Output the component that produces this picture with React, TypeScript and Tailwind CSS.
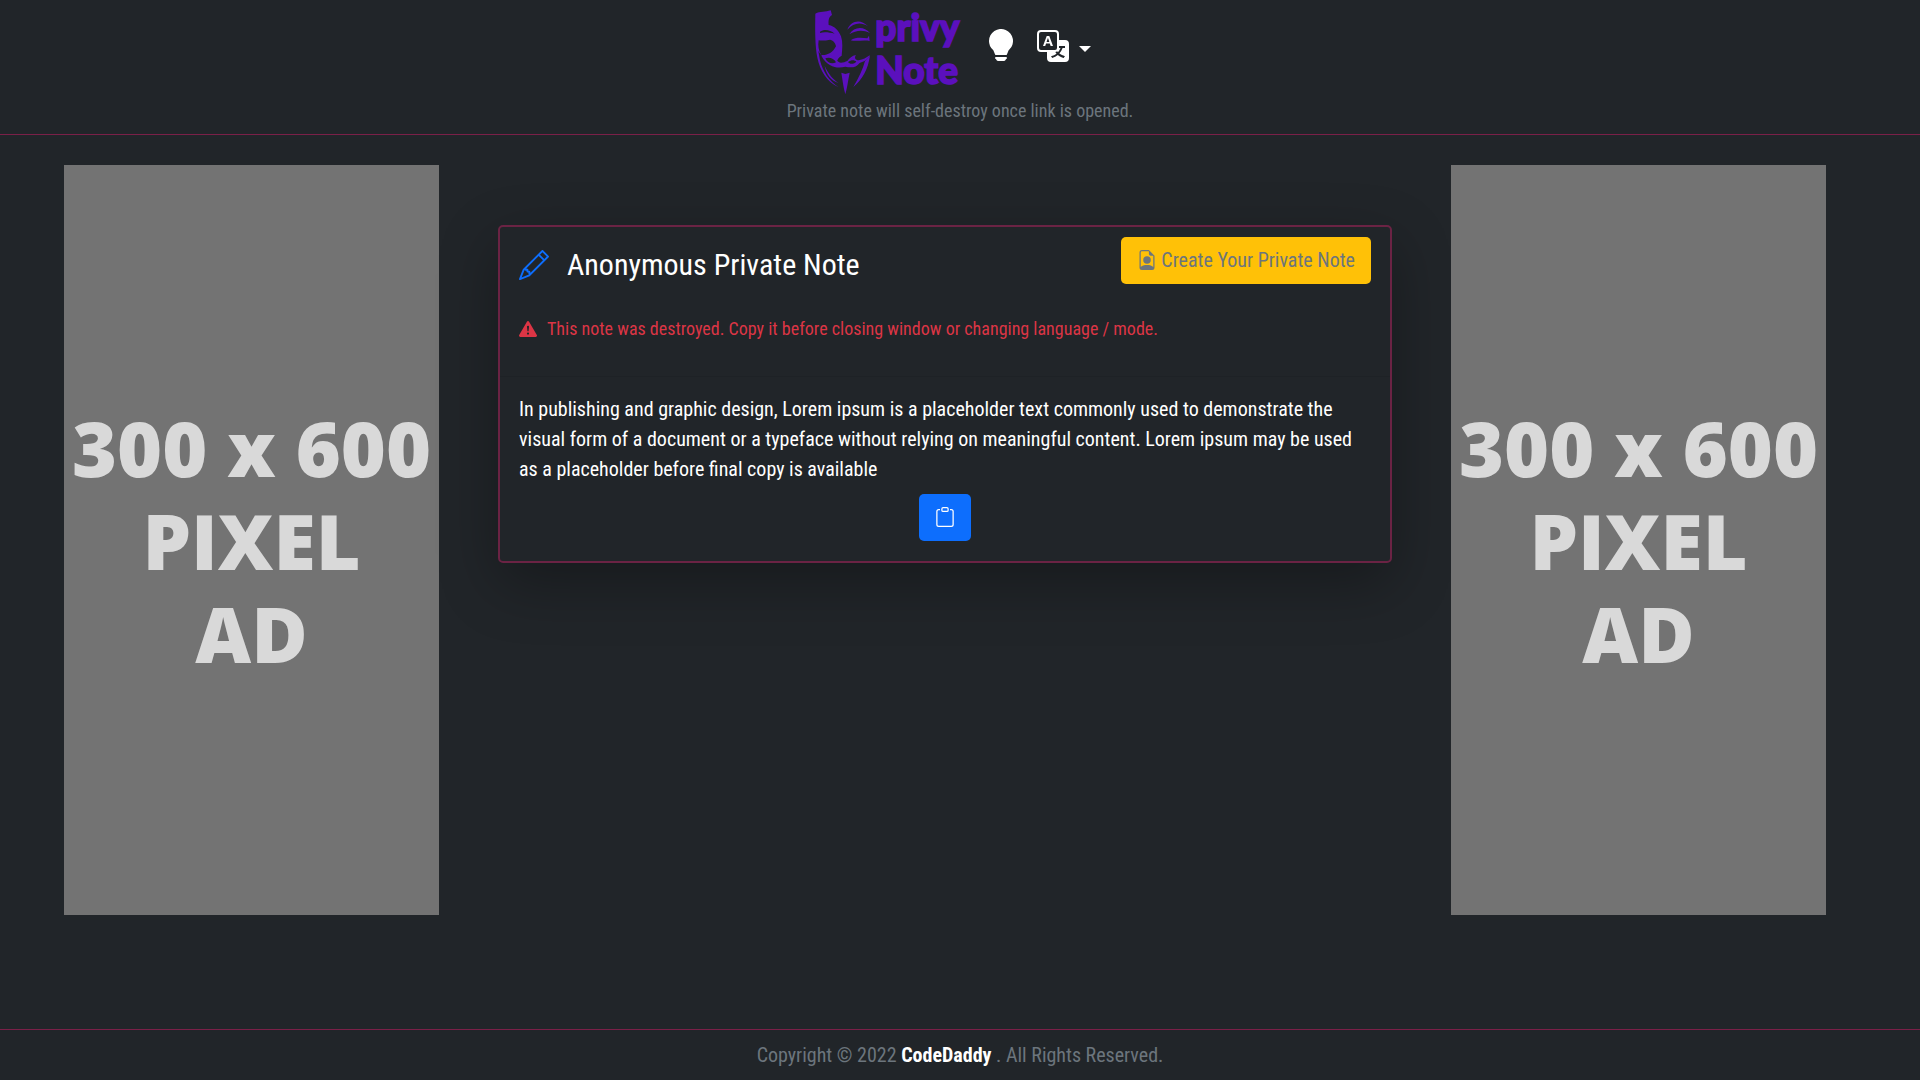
import React from "react";
import {
  BsClipboard,
  BsExclamationTriangleFill,
  BsFileEarmarkPerson,
  BsLightbulbFill,
  BsPencil,
  BsTranslate,
} from "react-icons/bs";

const Logo = () => (
  <svg viewBox="0 0 480 285" className="h-[95px] w-[160px]" role="img" aria-label="privy Note">
    <g fill="#5b10bd" fillRule="evenodd">
      {/* forehead, nose bridge and left cheek */}
      <path d="M28 26 C42 18 58 22 74 16 L78 30 C68 36 67 46 68 60 C86 64 98 76 105 94 C111 112 109 132 107 152 C98 156 94 164 92 170 C84 154 66 150 50 156 C46 150 42 146 37 138 L42 166 C50 200 70 228 98 247 C62 230 42 196 34 158 C27 122 27 74 28 26 Z M42 80 C54 72 72 74 86 86 C70 82 54 80 42 84 Z M38 106 C35 122 38 138 46 150 C62 152 80 144 90 124 C88 112 80 106 72 104 C60 106 48 108 38 106 Z" />
      {/* right brow and eye */}
      <path d="M124 74 C132 50 162 38 186 64 C164 50 142 54 124 74 Z" />
      <path d="M130 88 C144 66 172 62 192 84 C170 74 150 76 130 88 Z" />
      <path d="M134 106 C148 96 168 98 184 100 L189 92 L191 108 C174 104 150 110 134 106 Z" />
      {/* moustache */}
      <path d="M46 152 C62 148 84 150 93 166 C99 178 114 172 124 168 C130 160 138 152 150 150 C144 158 148 166 158 166 C170 164 182 158 192 150 C184 168 170 170 161 174 C150 190 132 188 118 185 C98 190 66 190 46 152 Z M58 160 C64 176 80 178 90 172 C84 160 70 156 58 160 Z M126 171 C132 180 146 176 151 170 C146 166 138 163 126 171 Z" />
      {/* jaw and beard */}
      <path d="M192 152 C186 192 170 222 142 246 C158 218 170 194 177 168 Z" />
      <path d="M56 182 C66 206 82 224 98 234 C76 228 60 208 56 182 Z" />
      <path d="M106 203 L118 207 L131 203 C126 226 124 248 118 268 C112 248 110 226 106 203 Z" />
    </g>
    <g
      fill="#5b10bd"
      stroke="#5b10bd"
      strokeWidth="5"
      fontFamily="Lato, 'Liberation Sans', sans-serif"
      fontWeight="900"
      fontSize="111"
    >
      <text x="208" y="108">privy</text>
      <text x="208" y="236">Note</text>
    </g>
  </svg>
);

const Ad = () => (
  <aside className="flex h-[750px] w-[375px] shrink-0 items-center justify-center bg-[#737373] text-center font-['Open_Sans',sans-serif] text-[77px] leading-[93px] font-extrabold text-[#d9d9d9]">
    <p>
      300 x 600
      <br />
      PIXEL
      <br />
      AD
    </p>
  </aside>
);

const Header = () => (
  <header className="flex flex-col items-center border-b border-[#7a2048] pt-[5px] pb-[13px]">
    <div className="mr-6 flex items-start">
      <a href="#home">
        <Logo />
      </a>
      <button type="button" aria-label="Toggle mode" className="mt-6 ml-[19px] text-white">
        <BsLightbulbFill className="size-8" />
      </button>
      <button type="button" aria-label="Language" className="mt-[25px] ml-5 flex items-center gap-2.5 text-white">
        <BsTranslate className="size-8" />
        <span className="mt-1.5 border-x-[6px] border-t-[6px] border-x-transparent border-t-white" />
      </button>
    </div>
    <p className="text-[18px] leading-[21px] text-[#6c757d]">
      Private note will self-destroy once link is opened.
    </p>
  </header>
);

const NoteCard = () => (
  <section className="mt-[60px] min-w-0 flex-1 rounded-[5px] border-2 border-[#6b2344] bg-[#212529] shadow-[0_20px_60px_rgba(0,0,0,0.3)]">
    <div className="border-b border-[#1e2226] px-[19px] pt-2.5 pb-[33px]">
      <div className="flex items-start justify-between">
        <h1 className="mt-2.5 flex items-center gap-[18px] text-[30px] leading-9 text-white">
          <BsPencil className="size-[30px] text-[#0d6efd]" />
          Anonymous Private Note
        </h1>
        <button
          type="button"
          className="flex h-[47px] items-center gap-1 rounded-[5px] bg-[#ffc107] px-4 pb-0.5 text-[20px] text-[#6c757d]"
        >
          <BsFileEarmarkPerson className="size-5" />
          Create Your Private Note
        </button>
      </div>
      <p className="mt-[31px] flex items-center gap-2.5 text-[18px] leading-7 text-[#dc3545]">
        <BsExclamationTriangleFill className="size-[18px]" />
        This note was destroyed. Copy it before closing window or changing language / mode.
      </p>
    </div>
    <div className="px-[19px] pt-[17px] pb-5">
      <p className="text-[20px] leading-[30px] text-white">
        In publishing and graphic design, Lorem ipsum is a placeholder text commonly used to demonstrate the visual
        form of a document or a typeface without relying on meaningful content. Lorem ipsum may be used as a
        placeholder before final copy is available
      </p>
      <button
        type="button"
        aria-label="Copy note"
        className="mx-auto mt-2.5 flex h-[47px] w-[52px] items-center justify-center rounded-[5px] bg-[#0d6efd] pb-0.5 text-white"
      >
        <BsClipboard className="size-5" />
      </button>
    </div>
  </section>
);

const Footer = () => (
  <footer className="border-t border-[#7a2048] pt-2.5 pb-2.5 text-center text-[20px] leading-[30px] text-[#6c757d]">
    Copyright © 2022{" "}
    <a href="#codedaddy" className="font-bold text-white">
      CodeDaddy
    </a>{" "}
    . All Rights Reserved.
  </footer>
);

export default function App() {
  return (
    <div className="flex min-h-screen flex-col bg-[#212529] font-['Roboto_Condensed','Liberation_Sans_Narrow',Roboto,sans-serif]">
      <Header />
      <main className="flex flex-1 items-start gap-[59px] pt-[30px] pr-[94px] pl-16">
        <Ad />
        <NoteCard />
        <Ad />
      </main>
      <Footer />
    </div>
  );
}
